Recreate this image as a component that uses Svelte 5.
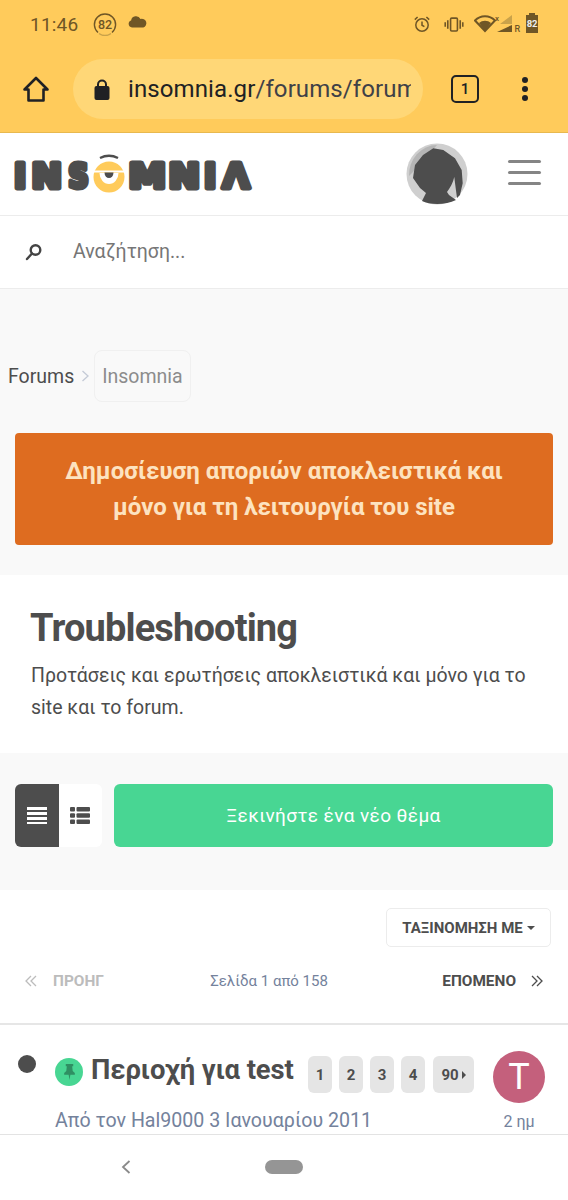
<script>
  const pages = ['1', '2', '3', '4'];
</script>

<div class="screen">
  <header class="chrome">
    <div class="status">
      <span class="time">11:46</span>
      <svg class="badge" width="24" height="24" viewBox="0 0 24 24">
        <path d="M5 20.500A10.600 10.600 0 1 1 19 20.500" fill="none" stroke="#6f5626" stroke-width="1.400"/>
        <path d="M6 21.500A10.600 10.600 0 0 0 18 21.500" fill="none" stroke="#c9a24a" stroke-width="1.400"/>
        <text x="12" y="16.500" text-anchor="middle" class="badge-text">82</text>
      </svg>
      <svg class="cloud" width="21" height="13" viewBox="0 0 20 13">
        <path d="M4.500 12.500A3.600 3.600 0 0 1 3.600 5.500 5 5 0 0 1 13 4 4.400 4.400 0 0 1 15.800 12.500Z" fill="#6f5626"/>
      </svg>
      <div class="status-right">
        <svg width="18" height="18" viewBox="0 0 18 18" fill="none" stroke="#6f5626" stroke-width="1.500">
          <circle cx="9" cy="10" r="6.200"/>
          <path d="M9 6.500V10.200L11.400 11.600M1.800 4.600 4.600 2M16.200 4.600 13.400 2"/>
        </svg>
        <svg class="vibe" width="20" height="15" viewBox="0 0 18 14" fill="none" stroke="#6f5626" stroke-width="1.500">
          <rect x="5.800" y="1" width="6.400" height="12" rx="1"/>
          <path d="M3.200 3V11M14.800 3V11M.8 5V9M17.200 5V9"/>
        </svg>
        <div class="net">
          <svg width="48" height="20" viewBox="0 0 48 20">
            <path d="M1 6.500A14 14 0 0 1 21 6.500L11 17Z" fill="none" stroke="#6f5626" stroke-width="2"/>
            <path d="M5 9A9 9 0 0 1 17 9L11 17Z" fill="#6f5626"/>
            <path d="M38 1V10H26Z" fill="#c9a24a"/>
            <path d="M38 11V18H23Z" fill="#6f5626"/>
            <text x="21" y="7" class="tiny">x</text>
            <text x="40.500" y="18" class="tiny r">R</text>
          </svg>
        </div>
        <div class="battery"><span>82</span></div>
      </div>
    </div>
    <div class="toolbar">
      <svg class="home" width="28" height="28" viewBox="0 0 28 28" fill="none" stroke="#202124" stroke-width="2.600" stroke-linejoin="round">
        <path d="M2.500 14.500 14 3 25.500 14.500H21.500V25.500H6.500V14.500Z"/>
      </svg>
      <div class="omnibox">
        <svg width="16" height="21" viewBox="0 0 16 21">
          <rect x="0.500" y="7" width="15" height="14" rx="2" fill="#202124"/>
          <path d="M4 8V5.500A4 4 0 0 1 12 5.500V8" fill="none" stroke="#202124" stroke-width="2"/>
        </svg>
        <span class="url">insomnia.gr<span class="url-dim">/forums/forum</span></span>
      </div>
      <div class="tabs">1</div>
      <div class="menu-dots"><i></i><i></i><i></i></div>
    </div>
  </header>

  <div class="page">
    <div class="site-head">
      <svg class="logo" width="240" height="44" viewBox="0 0 240 44" role="img" aria-label="Insomnia">
        <g class="logo-letters">
          <text x="0" y="35.500">I</text>
          <text x="17.500" y="35.500" textLength="30.500" lengthAdjust="spacingAndGlyphs">N</text>
          <text x="54.300" y="35.500" textLength="20.500" lengthAdjust="spacingAndGlyphs">S</text>
          <text x="114.400" y="35.500" textLength="37.500" lengthAdjust="spacingAndGlyphs">M</text>
          <text x="154.400" y="35.500" textLength="31.500" lengthAdjust="spacingAndGlyphs">N</text>
          <text x="190" y="35.500">I</text>
          <text x="208.500" y="35.500" textLength="27" lengthAdjust="spacingAndGlyphs">Λ</text>
        </g>
        <circle cx="95" cy="25" r="15.500" fill="#ffcb5b"/>
        <path d="M80 18.500H110V20.500H80Z" fill="#fff"/>
        <path d="M85.500 21H104.500A9.500 11 0 0 1 85.500 21Z" fill="#fff"/>
        <path d="M90.500 20.500H99.500A4.500 5.500 0 0 1 90.500 20.500Z" fill="#4d4d4d"/>
        <path d="M86 6Q95 1.500 104 6" fill="none" stroke="#4d4d4d" stroke-width="2.400"/>
      </svg>
      <div class="avatar">
        <svg width="62" height="62" viewBox="0 0 62 62">
          <circle cx="31" cy="31" r="30.500" fill="#cfcfcf"/>
          <path d="M3 33A28 30 0 0 1 31 2L12 24Z" fill="#b5b5b5"/>
          <path d="M27.300 5.300L37.300 7L49 15.300L55.700 27L56.700 40.300L54 52L51 55L49 40L48.300 34C47 40 44 45 41 49L43 52L50 57C40 62 24 62 16 58L20 50L14 45L7 35L9 22L17 12Z" fill="#4d4d4d"/>
        </svg>
      </div>
      <button class="burger" aria-label="Μενού"><i></i><i></i><i></i></button>
    </div>

    <div class="search">
      <svg width="18" height="18" viewBox="0 0 18 18" fill="none" stroke="#444" stroke-width="2.400">
        <circle cx="10.500" cy="7" r="4.800"/>
        <path d="M7 10.500 2 16" stroke-linecap="round"/>
      </svg>
      <span>Αναζήτηση...</span>
    </div>

    <div class="grey-top">
      <nav class="crumbs">
        <span>Forums</span>
        <svg width="9" height="14" viewBox="0 0 9 14" fill="none" stroke="#c4cad6" stroke-width="1.300"><path d="M1.500 2 7 7 1.500 12"/></svg>
        <span class="crumb-current">Insomnia</span>
      </nav>
      <div class="notice">Δημοσίευση αποριών αποκλειστικά και<br>μόνο για τη λειτουργία του site</div>
    </div>

    <section class="forum-info">
      <h1>Troubleshooting</h1>
      <p>Προτάσεις και ερωτήσεις αποκλειστικά και μόνο για το site και το forum.</p>
    </section>

    <div class="actions">
      <div class="view-toggle">
        <div class="view active">
          <svg width="20" height="18" viewBox="0 0 20 18" fill="#fff">
            <rect y="0" width="20" height="3"/><rect y="5" width="20" height="3"/><rect y="10" width="20" height="3"/><rect y="15" width="20" height="2"/>
          </svg>
        </div>
        <div class="view">
          <svg width="20" height="17" viewBox="0 0 20 17" fill="#4d4d4d">
            <rect y="0" width="5" height="4.500" rx="1"/><rect x="6.500" y="0" width="13.500" height="4.500" rx="1"/>
            <rect y="6.300" width="5" height="4.500" rx="1"/><rect x="6.500" y="6.300" width="13.500" height="4.500" rx="1"/>
            <rect y="12.500" width="5" height="4.500" rx="1"/><rect x="6.500" y="12.500" width="13.500" height="4.500" rx="1"/>
          </svg>
        </div>
      </div>
      <button class="start">Ξεκινήστε ένα νέο θέμα</button>
    </div>

    <section class="topics">
      <div class="sort-row">
        <button class="sort">ΤΑΞΙΝΟΜΗΣΗ ΜΕ<i class="caret"></i></button>
      </div>
      <div class="pager">
        <span class="prev">
          <svg width="12" height="12" viewBox="0 0 12 12" fill="none" stroke="currentColor" stroke-width="1.300"><path d="M6 1 1 6 6 11M11 1 6 6 11 11"/></svg>
          ΠΡΟΗΓ
        </span>
        <span class="page-of">Σελίδα 1 από 158</span>
        <span class="next">
          ΕΠΟΜΕΝΟ
          <svg width="12" height="12" viewBox="0 0 12 12" fill="none" stroke="currentColor" stroke-width="1.300"><path d="M1 1 6 6 1 11M6 1 11 6 6 11"/></svg>
        </span>
      </div>
      <div class="topic">
        <i class="unread"></i>
        <div class="topic-main">
          <div class="topic-title">
            <span class="pin">
              <svg width="13" height="16" viewBox="0 0 12 15" fill="#2f8f63">
                <path d="M2.500 0H9.500V2H8.500L9 6.500 11 8.500V10H1V8.500L3 6.500 3.500 2H2.500ZM5.200 10H6.800L6 15Z"/>
              </svg>
            </span>
            <h2>Περιοχή για test</h2>
            <div class="pills">
              {#each pages as p}
                <span class="pill">{p}</span>
              {/each}
              <span class="pill wide">90<i class="caret-r"></i></span>
            </div>
          </div>
          <div class="byline">Από τον Hal9000 3 Ιανουαρίου 2011</div>
        </div>
        <div class="last-post">
          <div class="letter">T</div>
          <span>2 ημ</span>
        </div>
      </div>
    </section>
  </div>

  <footer class="nav">
    <svg width="12" height="16" viewBox="0 0 12 16" fill="none" stroke="#8a8a8a" stroke-width="1.800"><path d="M9.500 2 3 8 9.500 14"/></svg>
    <span class="pill-home"></span>
  </footer>
</div>

<style>
  :global(body) { margin: 0; background: #fff; }
  .screen {
    width: 568px; height: 1200px; overflow: hidden; display: flex; flex-direction: column;
    font-family: Roboto, "Noto Sans", sans-serif; color: #4d4d4d;
  }
  .chrome { background: #ffcb5b; height: 133px; flex: none; border-bottom: 1px solid #e8b94f; box-sizing: border-box; }
  .status { height: 44px; display: flex; align-items: center; padding: 4px 30px 0 30px; box-sizing: border-box; color: #6f5626; }
  .time { font-size: 19px; font-weight: 400; letter-spacing: 0.2px; }
  .badge { margin-left: 15px; }
  .badge-text { font: 500 12.500px Roboto, sans-serif; fill: #6f5626; }
  .cloud { margin: -5px 0 0 10px; }
  .status-right { margin-left: auto; display: flex; align-items: center; gap: 13px; }
  .tiny { font: 500 8px Roboto, sans-serif; fill: #6f5626; }
  .tiny.r { font-size: 9px; }
  .net { margin-left: -3px; margin-right: -9px; display: flex; }
  .battery { width: 12px; height: 18px; background: #6f5626; position: relative; display: flex; align-items: center; justify-content: center; margin-top: -1px; }
  .battery::before { content: ''; position: absolute; top: -2px; left: 3px; width: 6px; height: 2px; background: #6f5626; }
  .battery span { font-size: 9.500px; font-weight: 700; color: #eee; letter-spacing: -0.2px; }

  .toolbar { height: 88px; display: flex; align-items: center; padding: 2px 0 0 22px; box-sizing: border-box; }
  .home { flex: none; }
  .omnibox {
    margin-left: 23px; width: 350px; height: 60px; flex: none; border-radius: 30px; background: #ffd777;
    display: flex; align-items: center; box-sizing: border-box; padding: 0 12px 0 21px; overflow: hidden;
  }
  .url { margin-left: 18px; font-size: 24px; color: #202124; white-space: nowrap; overflow: hidden; flex: 1; letter-spacing: 0.1px; }
  .url-dim { color: #3f4147; }
  .tabs {
    margin-left: 28px; width: 24px; height: 24px; border: 2.500px solid #202124; border-radius: 5px; flex: none;
    display: flex; align-items: center; justify-content: center; font-size: 15px; font-weight: 500; color: #202124;
  }
  .menu-dots { margin-left: 43px; display: flex; flex-direction: column; gap: 3px; }
  .menu-dots i { width: 6px; height: 6px; border-radius: 50%; background: #202124; display: block; }

  .page { flex: 1; min-height: 0; overflow: hidden; }
  .site-head { height: 83px; box-sizing: border-box; display: flex; align-items: center; padding: 0 27px 0 14px; border-bottom: 1px solid #ececec; background: #fff; }
  .logo { flex: none; }
  .logo-letters text {
    font: 700 33px "DejaVu Sans", sans-serif; fill: #4d4d4d; stroke: #4d4d4d; stroke-width: 5px; stroke-linejoin: round;
  }
  .avatar { margin-left: auto; width: 62px; height: 62px; margin-top: -1px; }
  .burger { margin-left: 40px; width: 33px; height: 25px; padding: 0; border: 0; background: none; display: flex; flex-direction: column; justify-content: space-between; margin-top: -3px; }
  .burger i { display: block; height: 3px; background: #858585; border-radius: 2px; }

  .search { height: 73px; box-sizing: border-box; display: flex; align-items: center; padding: 0 0 1px 25px; gap: 30px; border-bottom: 1px solid #ececec; background: #fff; font-size: 19.500px; color: #767676; }

  .grey-top { background: #f9f9f9; height: 286px; box-sizing: border-box; padding-top: 60px; }
  .crumbs { display: flex; align-items: center; padding-left: 8px; font-size: 19.500px; color: #4d4d4d; height: 54px; }
  .crumbs svg { margin: 0 4px 0 7px; }
  .crumb-current { color: #8c8c8c; border: 1px solid #f0f0f0; border-radius: 8px; height: 52px; box-sizing: border-box; display: flex; align-items: center; padding: 0 7px; }
  .notice {
    margin: 30px 15px 0; height: 112px; box-sizing: border-box; background: #de6c20; border-radius: 4px; color: #fde3c0;
    font-size: 24px; font-weight: 700; line-height: 36px; text-align: center; padding-top: 20px;
  }

  .forum-info { background: #fff; height: 178px; box-sizing: border-box; padding: 29px 31px 0; }
  h1 { margin: 0 0 0 -1px; font-size: 38px; font-weight: 700; line-height: 48px; letter-spacing: -0.85px; color: #4d4d4d; }
  .forum-info p { margin: 8px 0 0; font-size: 19.500px; line-height: 32px; color: #4d4d4d; }

  .actions { background: #f9f9f9; height: 137px; box-sizing: border-box; padding: 31px 15px 0; display: flex; gap: 12px; align-items: flex-start; }
  .view-toggle { display: flex; border-radius: 6px; overflow: hidden; flex: none; }
  .view { width: 43.500px; height: 63px; background: #fff; display: flex; align-items: center; justify-content: center; }
  .view.active { background: #4d4d4d; }
  .start { flex: 1; height: 63px; border: 0; border-radius: 6px; background: #48d693; color: #fff; font: 400 19px Roboto, sans-serif; letter-spacing: 0.4px; }

  .topics { background: #fff; }
  .sort-row { display: flex; justify-content: flex-end; padding: 18px 17px 0 0; }
  .sort { height: 39px; width: 165px; border: 1px solid #ececec; border-radius: 5px; background: #fff; font: 700 15px Roboto, sans-serif; color: #4d4d4d; padding: 0; display: flex; align-items: center; justify-content: center; }
  .caret { width: 0; height: 0; border: 4.500px solid transparent; border-top-color: #4d4d4d; border-bottom-width: 0; margin-left: 4px; }
  .pager { display: flex; justify-content: space-between; align-items: center; height: 36px; margin-top: 16px; padding: 0 25px; font-size: 15.400px; font-weight: 700; }
  .prev { color: #bcbcbc; display: flex; align-items: center; gap: 16px; }
  .next { color: #4d4d4d; display: flex; align-items: center; gap: 15px; }
  .page-of { color: #74829c; font-weight: 400; font-size: 15px; margin-left: -8px; }

  .topic { margin-top: 24px; border-top: 2px solid #e6e6e6; display: flex; padding: 26px 23px 0 18px; }
  .unread { width: 18px; height: 18px; border-radius: 50%; background: #4d4d4d; flex: none; margin-top: 4px; display: block; }
  .topic-main { margin-left: 19px; flex: 1; min-width: 0; }
  .topic-title { display: flex; align-items: flex-start; }
  .pin { width: 28px; height: 28px; border-radius: 50%; background: #48d693; display: flex; align-items: center; justify-content: center; flex: none; margin-top: 7px; }
  h2 { margin: -1px 0 0 8px; width: 202px; flex: none; font-size: 27.400px; font-weight: 700; line-height: 40px; white-space: nowrap; letter-spacing: -0.1px; }
  .pills { display: flex; gap: 7px; margin: 5px 0 0 15px; }
  .pill { width: 24px; height: 37px; background: #e5e5e5; border-radius: 6px; display: flex; align-items: center; justify-content: center; font-size: 15px; font-weight: 700; color: #4d4d4d; }
  .pill.wide { width: 41px; margin-left: 1px; }
  .caret-r { width: 0; height: 0; border: 4.500px solid transparent; border-left-color: #4d4d4d; border-right-width: 0; margin-left: 3px; }
  .byline { margin-top: 16px; font-size: 19.600px; line-height: 24px; color: #74829c; white-space: nowrap; }
  .last-post { width: 52px; flex: none; display: flex; flex-direction: column; align-items: center; margin-left: 19px; color: #74829c; font-size: 16px; }
  .letter { width: 52px; height: 52px; border-radius: 50%; background: #c4607c; color: #fff; font-size: 36px; line-height: 52px; text-align: center; margin-bottom: 9px; }

  .nav { height: 66px; flex: none; background: #fff; border-top: 1px solid #e3e3e3; box-sizing: border-box; display: flex; align-items: flex-start; padding: 24px 0 0 120px; }
  .pill-home { width: 38px; height: 14px; border-radius: 7px; background: #959595; margin: 1px 0 0 133px; }
</style>
